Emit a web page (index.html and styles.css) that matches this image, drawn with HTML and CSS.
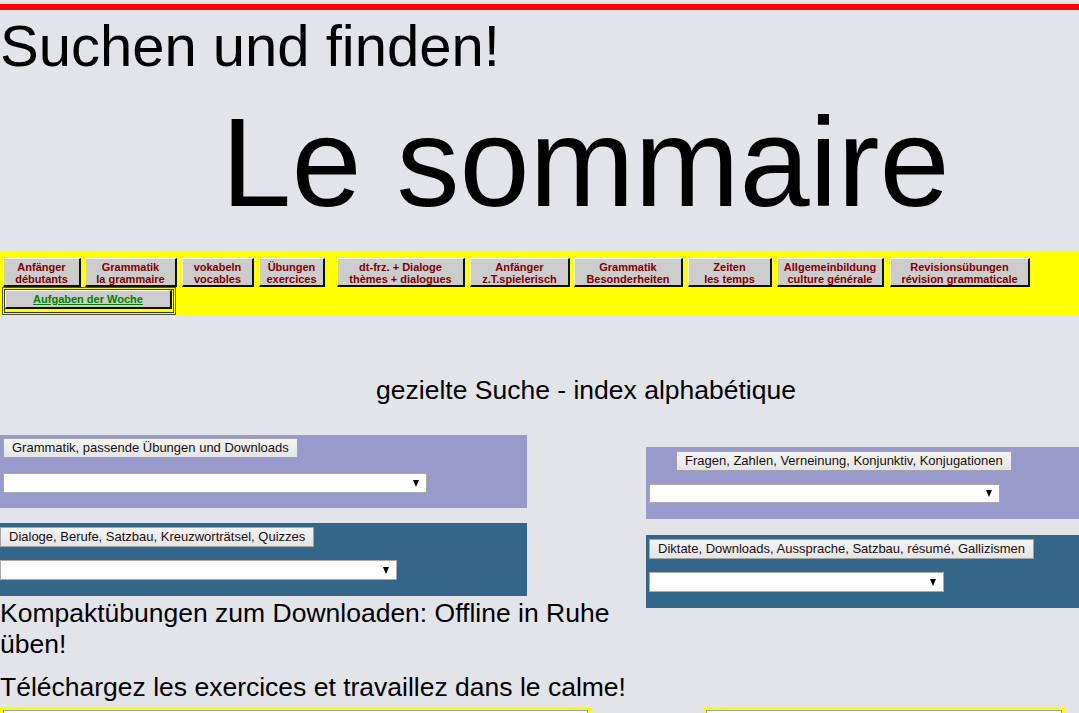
FILE: index.html
```html
<!DOCTYPE html>
<html lang="de">
<head>
<meta charset="utf-8">
<title>Le sommaire</title>
<link rel="stylesheet" href="styles.css">
</head>
<body>
<div class="topbar"></div>
<h1 class="title">Suchen und finden!</h1>
<h2 class="sommaire">Le sommaire</h2>

<nav class="nav">
  <div class="nav-row">
    <a class="nbtn">Anfänger<br>débutants</a>
    <a class="nbtn">Grammatik<br>la grammaire</a>
    <a class="nbtn">vokabeln<br>vocables</a>
    <a class="nbtn">Übungen<br>exercices</a>
    <a class="nbtn">dt-frz. + Dialoge<br>thèmes + dialogues</a>
    <a class="nbtn">Anfänger<br>z.T.spielerisch</a>
    <a class="nbtn">Grammatik<br>Besonderheiten</a>
    <a class="nbtn">Zeiten<br>les temps</a>
    <a class="nbtn">Allgemeinbildung<br>culture générale</a>
    <a class="nbtn">Revisionsübungen<br>révision grammaticale</a>
  </div>
  <div class="nav-row2">
    <div class="week-outer">
      <div class="week-inner">
        <a class="week-btn">Aufgaben der Woche</a>
      </div>
    </div>
  </div>
</nav>

<p class="index-title">gezielte Suche - index alphabétique</p>

<div class="columns">
  <div class="col-left">
    <div class="box purple box-first">
      <button class="gbtn">Grammatik, passende Übungen und Downloads</button>
      <div class="fselect w424"><span class="arrow"></span></div>
    </div>
    <div class="box blue box-flush">
      <button class="gbtn">Dialoge, Berufe, Satzbau, Kreuzworträtsel, Quizzes</button>
      <div class="fselect w397"><span class="arrow"></span></div>
    </div>
    <p class="big">Kompaktübungen zum Downloaden: Offline in Ruhe üben!</p>
    <p class="big second">Téléchargez les exercices et travaillez dans le calme!</p>
  </div>
  <div class="col-right">
    <div class="box purple">
      <button class="gbtn indent">Fragen, Zahlen, Verneinung, Konjunktiv, Konjugationen</button>
      <div class="fselect w351"><span class="arrow"></span></div>
    </div>
    <div class="box blue">
      <button class="gbtn">Diktate, Downloads, Aussprache, Satzbau, résumé, Gallizismen</button>
      <div class="fselect w295"><span class="arrow"></span></div>
    </div>
  </div>
</div>

<div class="bottom-row">
  <div class="ybox ybox-left"><div class="ybox-inner"></div></div>
  <div class="ybox ybox-right"><div class="ybox-inner"></div></div>
</div>
</body>
</html>
```

FILE: styles.css
```css
html, body {
  margin: 0;
  padding: 0;
}
body {
  background: #e3e4e9;
  font-family: "Liberation Sans", Arial, sans-serif;
  color: #000;
  overflow: hidden;
}
.topbar {
  margin-top: 4px;
  height: 6px;
  background: #ff0000;
}
.title {
  margin: 3px 0 0 0;
  font-size: 58px;
  line-height: 66px;
  font-weight: normal;
}
.sommaire {
  margin: 11px 0 0 0;
  padding-left: 92px;
  text-align: center;
  font-size: 126px;
  line-height: 145px;
  font-weight: normal;
}
.nav {
  margin-top: 17px;
  background: #ffff00;
  padding-top: 6px;
  height: 63px;
  box-sizing: border-box;
}
.nav-row {
  display: flex;
  padding-left: 3px;
}
.nbtn {
  box-sizing: border-box;
  height: 29px;
  background: #cccccc;
  border-top: 1px solid #ffffff;
  border-left: 1px solid #ffffff;
  border-right: 2px solid #111;
  border-bottom: 2px solid #111;
  color: #800000;
  font-weight: bold;
  font-size: 11px;
  line-height: 12px;
  text-align: center;
  display: flex;
  align-items: center;
  justify-content: center;
  padding-top: 1px;
}
.nbtn:nth-child(1) { width: 78px; }
.nbtn:nth-child(2) { width: 92px; margin-left: 4px; }
.nbtn:nth-child(3) { width: 72px; margin-left: 5px; }
.nbtn:nth-child(4) { width: 66px; margin-left: 5px; }
.nbtn:nth-child(5) { width: 128px; margin-left: 12px; }
.nbtn:nth-child(6) { width: 100px; margin-left: 5px; }
.nbtn:nth-child(7) { width: 109px; margin-left: 4px; }
.nbtn:nth-child(8) { width: 84px; margin-left: 5px; }
.nbtn:nth-child(9) { width: 107px; margin-left: 5px; }
.nbtn:nth-child(10) { width: 140px; margin-left: 6px; }

.nav-row2 {
  padding-left: 2px;
}
.week-outer {
  width: 174px;
  height: 28px;
  box-sizing: border-box;
  border: 1px solid #50502a;
  padding: 1px;
}
.week-inner {
  height: 100%;
  box-sizing: border-box;
  border: 1px solid #3a3a3a;
  padding-bottom: 3px;
}
.week-btn {
  display: flex;
  align-items: center;
  justify-content: center;
  box-sizing: border-box;
  width: 167px;
  height: 19px;
  background: #cccccc;
  border-top: 1px solid #ffffff;
  border-left: 1px solid #ffffff;
  border-right: 2px solid #111;
  border-bottom: 2px solid #111;
  color: #008000;
  font-weight: bold;
  font-size: 11px;
  text-decoration: underline;
}

.index-title {
  margin: 60px 0 0 0;
  padding-left: 93px;
  text-align: center;
  font-size: 26.5px;
  line-height: 31px;
}

.columns {
  margin-top: 29px;
  display: grid;
  grid-template-columns: 640px 1fr;
  column-gap: 6px;
}
.col-right {
  padding-top: 12px;
}
.box {
  box-sizing: border-box;
  height: 73px;
  padding: 4px 3px 0 3px;
  display: flex;
  flex-direction: column;
  align-items: flex-start;
}
.box + .box {
  margin-top: 15px;
}
.col-right .box + .box {
  margin-top: 16px;
}
.col-right .box:first-child {
  height: 72px;
}
.col-left .box {
  width: 527px;
}
.col-right .box {
  width: 100%;
}
.box-first {
  padding-top: 3px;
}
.box-first .fselect {
  margin-top: 15px;
}
.box-flush {
  padding-left: 0;
}
.purple {
  background: #9999cc;
}
.blue {
  background: #336688;
}
.gbtn {
  box-sizing: border-box;
  height: 20px;
  margin: 0;
  padding: 0 8px;
  border: 1px solid #a3a3a3;
  border-radius: 0;
  background: linear-gradient(#f4f4f4, #e4e4e4);
  font-family: "Liberation Sans", Arial, sans-serif;
  font-size: 13px;
  line-height: 18px;
  color: #1a0f0f;
}
.gbtn.indent {
  margin-left: 27px;
}
.fselect {
  box-sizing: border-box;
  margin-top: 13px;
  height: 20px;
  background: #ffffff;
  border: 1px solid #a9a9a9;
  display: flex;
  align-items: center;
  justify-content: flex-end;
  padding-right: 7px;
}
.w424 { width: 424px; }
.w397 { width: 397px; }
.w351 { width: 351px; height: 19px; }
.w295 { width: 295px; }
.arrow {
  width: 0;
  height: 0;
  border-left: 3.5px solid transparent;
  border-right: 3.5px solid transparent;
  border-top: 7px solid #000;
}
.big {
  margin: 2px 0 0 0;
  font-size: 26.5px;
  line-height: 31px;
}
.big.second {
  margin-top: 12px;
}
.bottom-row {
  margin-top: 4px;
  display: flex;
}
.ybox {
  box-sizing: border-box;
  height: 60px;
  border: 3px solid #ffff00;
  border-bottom: 0;
}
.ybox-left {
  width: 591px;
}
.ybox-right {
  width: 362px;
  margin-left: 112px;
}
.ybox-inner {
  height: 100%;
  background: #ffffff;
  border: 1px solid #a0a0a0;
  border-bottom: 0;
  box-sizing: border-box;
}
```
